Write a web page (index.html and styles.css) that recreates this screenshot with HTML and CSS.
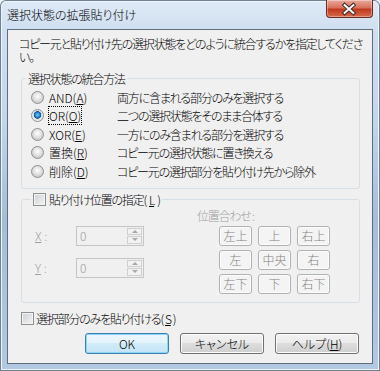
FILE: index.html
```html
<!DOCTYPE html>
<html lang="ja">
<head>
    <meta charset="UTF-8">
    <title>選択状態の拡張貼り付け</title>
    <link rel="stylesheet" href="styles.css">
</head>
<body>
<div class="window">
    <div class="titlebar">
        <span class="title">選択状態の拡張貼り付け</span>
        <span class="close">
            <svg width="47" height="18" viewBox="0 0 47 18">
                <path d="M19 6 L28 14 M28 6 L19 14" stroke="#3a2a28" stroke-width="4" stroke-linecap="square"/>
                <path d="M19 6 L28 14 M28 6 L19 14" stroke="#ffffff" stroke-width="2" stroke-linecap="square"/>
            </svg>
        </span>
    </div>
    <div class="client">
        <p class="intro">コピー元と貼り付け先の選択状態をどのように統合するかを指定してください。</p>

        <fieldset class="group merge">
            <legend>選択状態の統合方法</legend>
            <div class="opt"><span class="radio"></span><span class="opt-name">AND(<u>A</u>)</span><span>両方に含まれる部分のみを選択する</span></div>
            <div class="opt"><span class="radio on"></span><span class="opt-name"><span class="focus">OR(<u>O</u>)</span></span><span>二つの選択状態をそのまま合体する</span></div>
            <div class="opt"><span class="radio"></span><span class="opt-name">XOR(<u>E</u>)</span><span>一方にのみ含まれる部分を選択する</span></div>
            <div class="opt"><span class="radio"></span><span class="opt-name">置換(<u>R</u>)</span><span>コピー元の選択状態に置き換える</span></div>
            <div class="opt"><span class="radio"></span><span class="opt-name">削除(<u>D</u>)</span><span>コピー元の選択部分を貼り付け先から除外</span></div>
        </fieldset>

        <fieldset class="group pos">
            <legend><span class="check"></span>貼り付け位置の指定(<u>L</u>)</legend>
            <div class="pos-body">
                <div class="coords">
                    <div class="coord">
                        <span class="coord-label"><u>X</u> :</span>
                        <div class="spin"><span class="spin-val">0</span><span class="spin-btns"><span class="spin-up"></span><span class="spin-down"></span></span></div>
                    </div>
                    <div class="coord">
                        <span class="coord-label"><u>Y</u> :</span>
                        <div class="spin"><span class="spin-val">0</span><span class="spin-btns"><span class="spin-up"></span><span class="spin-down"></span></span></div>
                    </div>
                </div>
                <div class="align">
                    <div class="align-label">位置合わせ :</div>
                    <div class="align-grid">
                        <button class="cell" disabled>左上</button>
                        <button class="cell" disabled>上</button>
                        <button class="cell" disabled>右上</button>
                        <button class="cell" disabled>左</button>
                        <button class="cell" disabled>中央</button>
                        <button class="cell" disabled>右</button>
                        <button class="cell" disabled>左下</button>
                        <button class="cell" disabled>下</button>
                        <button class="cell" disabled>右下</button>
                    </div>
                </div>
            </div>
        </fieldset>

        <div class="only"><span class="check"></span>選択部分のみを貼り付ける(<u>S</u>)</div>

        <div class="actions">
            <button class="btn default">OK</button>
            <button class="btn">キャンセル</button>
            <button class="btn">ヘルプ(<u>H</u>)</button>
        </div>
    </div>
</div>
</body>
</html>
```

FILE: styles.css
```css
body { margin: 0; font: 300 12px/13px "Noto Sans CJK JP", "Liberation Sans", sans-serif; font-feature-settings: "palt"; letter-spacing: -1.2px; color: #000; }
u { text-underline-offset: 1px; }

.window { width: 380px; height: 371px; box-sizing: border-box; padding: 0 7px 7px; display: flex; flex-direction: column; border-radius: 6px 6px 0 0; background: linear-gradient(#dfeaf6 0, #cfdff1 30px, #c2d6ec 120px, #a6bcd8 220px, #b3c8e2 371px); box-shadow: inset 0 0 0 1px #6f8093, inset 0 0 0 2px #eef4fa; }
.titlebar { height: 29px; display: flex; justify-content: space-between; align-items: flex-start; }
.title { padding-top: 8px; letter-spacing: 0; }
.close { width: 47px; height: 18px; box-sizing: border-box; border: 1px solid #6b2a20; border-top: none; border-radius: 0 0 4px 4px; background: linear-gradient(#e9a99b 0, #d8715c 45%, #c2391f 55%, #d66a4c 100%); box-shadow: inset 0 0 0 1px rgba(255,255,255,.35); display: flex; }
.close svg { margin: -1px 0 0 -1px; }

.client { flex: 1; display: flex; flex-direction: column; background: #f0f0f0; border: 1px solid #5f6e7e; }
.intro { margin: 0; padding: 7px 6px 0 11px; }

.group { margin: 0 12px 0 13px; padding: 0; border: 1px solid #d5dfe5; border-radius: 3px; }
.group legend { padding: 0 2px; }
.merge { margin-top: 9px; padding: 3px 0 7px; }
.merge legend { margin-left: 4px; }
.opt { height: 18.5px; display: flex; align-items: center; padding-left: 9px; }
.opt-name { width: 68px; margin-left: 5px; letter-spacing: 0; }
.focus { outline: 1px dotted #000; outline-offset: 0; }

.radio { width: 13px; height: 13px; box-sizing: border-box; border-radius: 50%; border: 1px solid #8e8f8f; background: radial-gradient(circle at 50% 40%, #ffffff 0, #e8e8e8 3px, #cfcfcf 6px); }
.radio.on { background: radial-gradient(circle at 50% 45%, #7fd0f8 0, #1b7fcf 2.5px, #0c4f8e 3.5px, #dadada 4px, #f4f4f4 6px); }

.check { width: 13px; height: 13px; box-sizing: border-box; border: 1px solid #8e8f8f; background: linear-gradient(135deg, #cbcfd5, #f5f5f5); box-shadow: inset 0 0 0 1px #f4f4f4; display: inline-block; }

.pos { margin-top: 4px; }
.pos legend { margin-left: 9px; display: flex; align-items: center; gap: 3px; }
.pos-body { display: flex; padding: 3px 0 8px 13px; color: #a0a0a0; }
.coords { display: flex; flex-direction: column; gap: 12px; margin-top: 17px; }
.coord { display: flex; align-items: center; height: 20px; }
.coord-label { width: 41px; letter-spacing: 0; }
.spin { width: 68px; height: 20px; box-sizing: border-box; border: 1px solid #c5c5c5; display: flex; justify-content: space-between; }
.spin-val { padding: 2px 0 0 3px; color: #9c9c9c; }
.spin-btns { width: 15px; display: flex; flex-direction: column; gap: 1px; padding: 1px 1px 1px 0; }
.spin-up, .spin-down { flex: 1; border: 1px solid #cfcfcf; background: #f2f2f2; display: flex; align-items: center; justify-content: center; }
.spin-up::before { content: ""; border: 3px solid transparent; border-bottom-color: #a8a8a8; border-top: none; }
.spin-down::before { content: ""; border: 3px solid transparent; border-top-color: #a8a8a8; border-bottom: none; }

.align { margin-left: 53px; }
.align-label { margin-bottom: 4px; }
.align-grid { display: grid; grid-template-columns: repeat(3, 33px); grid-auto-rows: 20px; gap: 4px 6px; margin-left: 22px; }
.cell { font: inherit; letter-spacing: 0; padding: 0; color: #838383; border: 1px solid #adb2b5; border-radius: 3px; background: #f4f4f4; box-shadow: inset 0 0 0 1px #fcfcfc; }

.only { display: flex; align-items: center; gap: 2px; margin: 9px 0 0 13px; }

.actions { display: flex; justify-content: flex-end; gap: 11px; margin-top: 8px; padding-right: 13px; }
.btn { width: 84px; height: 21px; padding: 0; font: inherit; color: #000; border: 1px solid #707070; border-radius: 3px; background: linear-gradient(#f2f2f2 0, #ebebeb 50%, #dddddd 50%, #cfcfcf 100%); box-shadow: inset 0 0 0 1px #fcfcfc; }
.btn.default { border-color: #3c7fb1; background: linear-gradient(#eef8fd 0, #e3f3fc 50%, #d2ecfa 50%, #c3e4f6 100%); box-shadow: inset 0 0 0 1px #8fd6f6; }
```
